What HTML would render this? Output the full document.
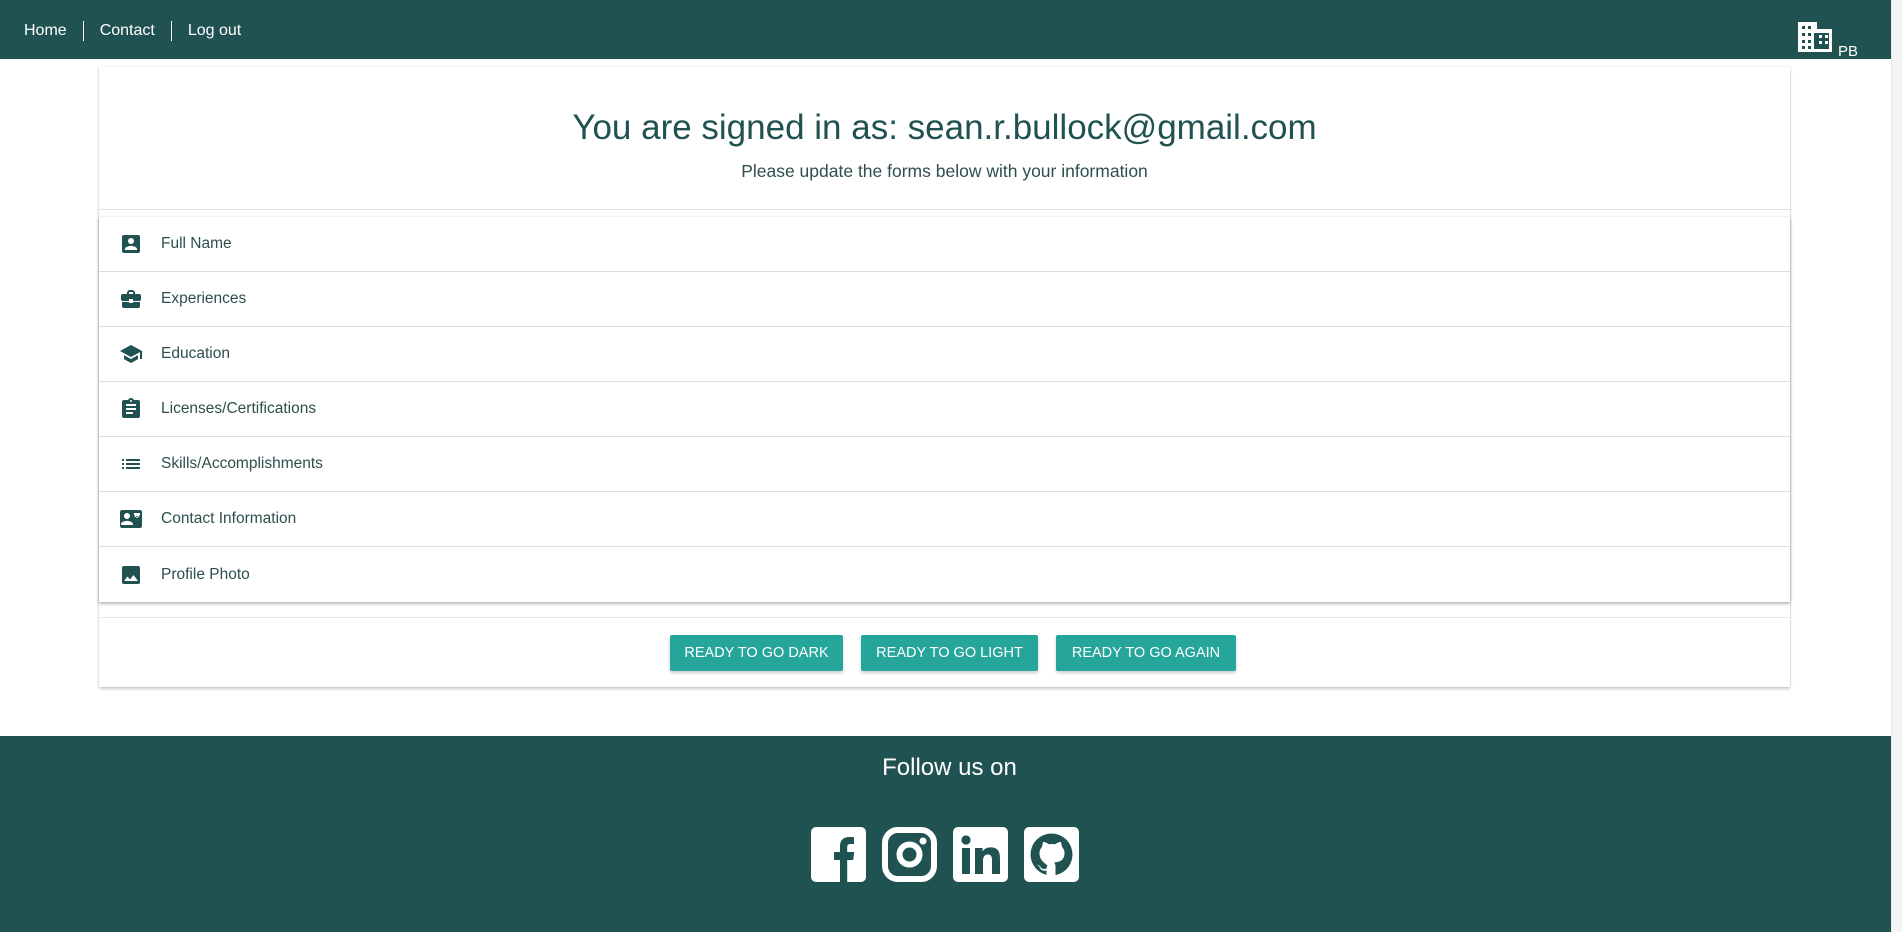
<!DOCTYPE html>
<html><head><meta charset="utf-8"><style>
*{box-sizing:border-box;margin:0;padding:0}
html,body{width:1902px;height:932px;overflow:hidden;background:#fff;font-family:"Liberation Sans",sans-serif;color:#1f5250}
.sb{position:absolute;right:0;top:0;width:11px;height:932px;background:#f4f4f4;border-left:1px solid #e8e8e8}
nav{position:absolute;left:0;top:0;width:1891px;height:59px;background:#1f5250;color:#fff}
nav .links{position:absolute;left:24px;top:21px;font-size:16px;display:flex;align-items:center}
nav .links span{padding:0 16px;border-left:1px solid #fff;line-height:20px}
nav .links span:first-child{border:none;padding-left:0}
.card{position:absolute;left:99px;top:67px;width:1691px;height:620px;background:#fff;box-shadow:0 2px 3px rgba(0,0,0,.2),0 0 2px rgba(0,0,0,.1)}
h1{position:absolute;top:41px;width:100%;text-align:center;font-weight:normal;font-size:35px;color:#1f5250}
.sub{position:absolute;top:94px;width:100%;text-align:center;font-size:17.5px;color:#2d4f4d}
.hr1{position:absolute;top:142px;left:0;right:0;border-top:1px solid #e0e0e0}
.list{position:absolute;left:0;top:150px;width:1691px;box-shadow:0 2px 3px rgba(0,0,0,.25),0 0 2px rgba(0,0,0,.15)}
.row{height:55px;border-bottom:1px solid #ddd;display:flex;align-items:center;font-size:15.5px;color:#2d4f4d}
.row:last-child{border-bottom:none}
.row svg{width:24px;height:24px;margin-left:20px;margin-right:18px;fill:#1f5250}
.hr2{position:absolute;top:550px;left:0;right:0;border-top:1px solid #e8e8e8}
.btn{position:absolute;top:568px;height:36px;background:#26a69a;color:#fff;font-size:14.5px;line-height:36px;text-align:center;box-shadow:0 2px 3px rgba(0,0,0,.2);border-radius:2px}
footer{position:absolute;left:0;top:736px;width:1891px;height:196px;background:#1f5250;color:#fff}
footer .f{position:absolute;top:18px;left:4px;width:100%;text-align:center;font-size:24px}
.soc{position:absolute;top:91px;width:55px;height:55px;background:#fff;border-radius:5px}
</style></head><body>
<nav><div class="links"><span>Home</span><span>Contact</span><span>Log out</span></div>
<svg style="position:absolute;left:1798px;top:22px" width="34" height="30" viewBox="0 0 34 30"><path fill="#fff" d="M0 0h19v7h15v23H0z"/><g fill="#1f5250"><rect x="4" y="4" width="3" height="3"/><rect x="10" y="4" width="3" height="3"/><rect x="4" y="11" width="3" height="3"/><rect x="10" y="11" width="3" height="3"/><rect x="4" y="18" width="3" height="3"/><rect x="10" y="18" width="3" height="3"/><rect x="4" y="24" width="3" height="3"/><rect x="10" y="24" width="3" height="3"/><rect x="16" y="11" width="15" height="16"/></g><g fill="#fff"><rect x="21" y="13" width="3" height="3"/><rect x="27" y="13" width="3" height="3"/><rect x="21" y="19" width="3" height="3"/><rect x="27" y="19" width="3" height="3"/></g></svg>
<div style="position:absolute;left:1838px;top:43px;font-size:15px">PB</div></nav>
<div class="sb"></div>
<div class="card">
<h1>You are signed in as: sean.r.bullock@gmail.com</h1>
<div class="sub">Please update the forms below with your information</div>
<div class="hr1"></div>
<div class="list">
<div class="row"><svg viewBox="0 0 24 24"><path d="M3 5v14a2 2 0 002 2h14a2 2 0 002-2V5a2 2 0 00-2-2H5a2 2 0 00-2 2zm12 4a3 3 0 11-6 0 3 3 0 016 0zm-9 8c0-2 4-3.1 6-3.1s6 1.1 6 3.1v1H6z"/></svg>Full Name</div>
<div class="row"><svg viewBox="0 0 24 24"><path d="M10 16v-1H3v4a2 2 0 002 2h14a2 2 0 002-2v-4h-7v1zm10-9h-4V5l-2-2h-4L8 5v2H4a2 2 0 00-2 2v3a2 2 0 002 2h6v-2h4v2h6a2 2 0 002-2V9a2 2 0 00-2-2zm-6 0h-4V5h4z"/></svg>Experiences</div>
<div class="row"><svg viewBox="0 0 24 24"><path d="M5 13.18v4L12 21l7-3.82v-4L12 17zM12 3L1 9l11 6 9-4.91V17h2V9z"/></svg>Education</div>
<div class="row"><svg viewBox="0 0 24 24"><path d="M19 3h-4.18A3 3 0 0012 1a3 3 0 00-2.82 2H5a2 2 0 00-2 2v14a2 2 0 002 2h14a2 2 0 002-2V5a2 2 0 00-2-2zm-7 0a1 1 0 110 2 1 1 0 010-2zm2 14H7v-2h7zm3-4H7v-2h10zm0-4H7V7h10z"/></svg>Licenses/Certifications</div>
<div class="row"><svg viewBox="0 0 24 24"><path d="M3 13h2v-2H3zm0 4h2v-2H3zm0-8h2V7H3zm4 4h14v-2H7zm0 4h14v-2H7zM7 7v2h14V7z"/></svg>Skills/Accomplishments</div>
<div class="row"><svg viewBox="0 0 24 24"><path d="M21 3H3C1.9 3 1 3.9 1 5v14c0 1.1.9 2 2 2h18c1.1 0 2-.9 2-2V5c0-1.1-.9-2-2-2zM8 6a3 3 0 110 6 3 3 0 010-6zm6 12H2v-1c0-2 4-3.1 6-3.1s6 1.1 6 3.1zm7-9h-6V6h6zm-3 2l-3-2v-1l3 2 3-2v1z"/></svg>Contact Information</div>
<div class="row"><svg viewBox="0 0 24 24"><path d="M21 19V5a2 2 0 00-2-2H5a2 2 0 00-2 2v14a2 2 0 002 2h14a2 2 0 002-2zM8.5 13.5l2.5 3 3.5-4.5 4.5 6H5z"/></svg>Profile Photo</div>
</div>
<div class="hr2"></div>
<div class="btn" style="left:571px;width:173px">READY TO GO DARK</div>
<div class="btn" style="left:762px;width:177px">READY TO GO LIGHT</div>
<div class="btn" style="left:957px;width:180px">READY TO GO AGAIN</div>
</div>
<footer><div class="f">Follow us on</div>
<div class="soc" style="left:811px"><svg width="55" height="55" viewBox="0 0 55 55"><path fill="#1f5250" d="M29 55V33h-6v-8h6v-6c0-6 4-9 9-9 2 0 4 0 5 .2V17h-3.5c-2.6 0-3.3 1.3-3.3 3.2V25h7l-1 8h-6v22z"/></svg></div>
<div class="soc" style="left:882px;background:none"><svg width="55" height="55" viewBox="0 0 55 55"><rect x="3" y="3" width="49" height="49" rx="13" fill="none" stroke="#fff" stroke-width="6"/><circle cx="27.5" cy="27.5" r="10" fill="none" stroke="#fff" stroke-width="6"/><circle cx="41" cy="14" r="3.5" fill="#fff"/></svg></div>
<div class="soc" style="left:953px"><svg width="55" height="55" viewBox="0 0 55 55"><g fill="#1f5250"><rect x="9" y="21" width="8" height="26"/><circle cx="13" cy="13" r="4.6"/><path d="M22 21h7.5v3.6c1.2-2.2 4-4.2 8-4.2 8 0 9.5 5 9.5 11.5V47h-8V34c0-3-.1-6.5-4-6.5s-5 3-5 6.4V47h-8z"/></g></svg></div>
<div class="soc" style="left:1024px"><svg width="55" height="55" viewBox="0 0 55 55"><circle cx="27.5" cy="27.5" r="21" fill="#1f5250"/><path fill="#fff" d="M18 20l1-5c2 0 4 1 6 2.3a14 14 0 016 0c2-1.3 4-2.3 6-2.3l1 5c2 2 2.5 4 2.5 6 0 7-4.5 9-10.5 9.5 1 1 1.5 2.5 1.5 4v9h-9v-5c-4 1-6-1-7-3.5-1-2-3-2.5-3-2.5 2 0 3.5 1.5 4.5 3 1 1.5 3 2 5.5 1 0-1 .5-2.2 1-3C19.5 35 15.5 33 15.5 26c0-2 .5-4 2.5-6z"/></svg></div>
</footer>
</body></html>
